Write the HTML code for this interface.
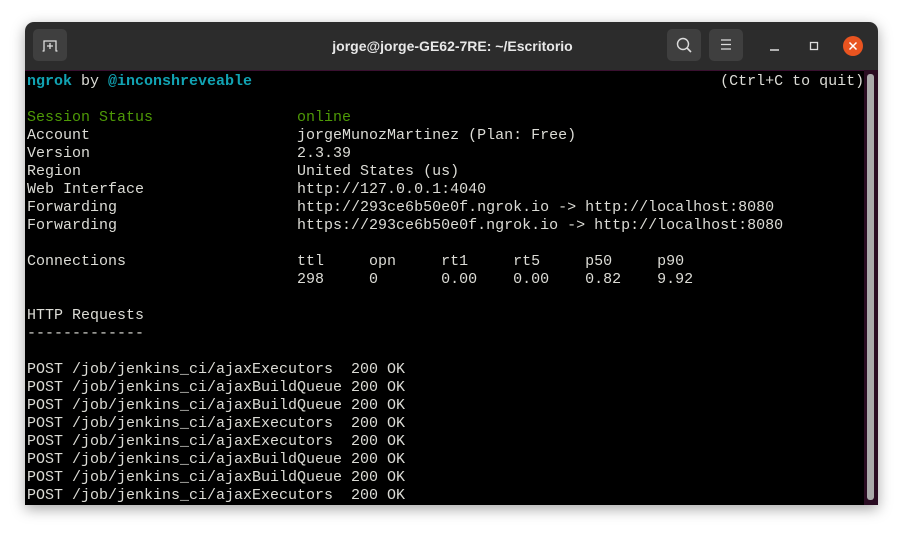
<!DOCTYPE html>
<html><head><style>
body{margin:0;width:903px;height:533px;background:#fff;overflow:hidden;position:relative}
.win{position:absolute;left:25px;top:22px;width:853px;height:483px;background:#2c2c2c;border-radius:9px 9px 0 0;box-shadow:0 4px 14px rgba(0,0,0,.35);overflow:hidden}
.title{position:absolute;left:0;right:0;top:0;height:48px;text-align:center;color:#e8e8e8;font:bold 14px "Liberation Sans",sans-serif;line-height:48px;padding-left:2px}
.btn{position:absolute;top:7px;width:34px;height:32px;background:#3f3f3f;border-radius:5px}
.term{position:absolute;left:0;top:48px;width:853px;height:435px;background:#000;border-top:1px solid #3a1030}
.sb{position:absolute;right:0;top:48px;width:14px;height:435px;background:#2a0c22}
.thumb{position:absolute;left:3px;top:4px;width:7px;height:426px;background:#aaa;border-radius:3px}
pre{position:absolute;left:2px;top:2px;margin:0;font:15px/18px "Liberation Mono",monospace;color:#dcdcd6}
.g{color:#4e9a06}.c{color:#11a3b3;font-weight:bold}
</style></head><body>
<div class="win">
<div class="title">jorge@jorge-GE62-7RE: ~/Escritorio</div>
<div class="btn" style="left:8px"><svg width="34" height="32"><path d="M11 22V12h12v10M9.5 22h2M22.5 22h2M17 14v6M14 17h6" stroke="#ddd" stroke-width="1.3" fill="none"/></svg></div>
<div class="btn" style="left:642px"><svg width="34" height="32"><circle cx="16" cy="15" r="5.5" stroke="#ddd" stroke-width="1.4" fill="none"/><path d="M20 19l4 4" stroke="#ddd" stroke-width="1.6"/></svg></div>
<div class="btn" style="left:684px"><svg width="34" height="32"><path d="M12 11h10M12 15.5h10M12 20h10" stroke="#ddd" stroke-width="1.2"/></svg></div>
<svg style="position:absolute;left:740px;top:14px" width="100" height="22"><path d="M5 14h9" stroke="#ddd" stroke-width="1.6"/><rect x="45.5" y="6.5" width="7" height="7" stroke="#ddd" stroke-width="1.3" fill="none"/><circle cx="88" cy="10" r="10" fill="#e95420"/><path d="M84.5 6.5l7 7M91.5 6.5l-7 7" stroke="#fff" stroke-width="1.5"/></svg>
<div class="term"><pre><span class="c">ngrok</span> by <span class="c">@inconshreveable</span>                                                    (Ctrl+C to quit)

<span class="g">Session Status                </span><span class="g">online</span>
Account                       jorgeMunozMartinez (Plan: Free)
Version                       2.3.39
Region                        United States (us)
Web Interface                 http://127.0.0.1:4040
Forwarding                    http://293ce6b50e0f.ngrok.io -> http://localhost:8080
Forwarding                    https://293ce6b50e0f.ngrok.io -> http://localhost:8080

Connections                   ttl     opn     rt1     rt5     p50     p90
                              298     0       0.00    0.00    0.82    9.92

HTTP Requests
-------------

POST /job/jenkins_ci/ajaxExecutors  200 OK
POST /job/jenkins_ci/ajaxBuildQueue 200 OK
POST /job/jenkins_ci/ajaxBuildQueue 200 OK
POST /job/jenkins_ci/ajaxExecutors  200 OK
POST /job/jenkins_ci/ajaxExecutors  200 OK
POST /job/jenkins_ci/ajaxBuildQueue 200 OK
POST /job/jenkins_ci/ajaxBuildQueue 200 OK
POST /job/jenkins_ci/ajaxExecutors  200 OK</pre></div>
<div class="sb"><div class="thumb"></div></div>
</div>
</body></html>
